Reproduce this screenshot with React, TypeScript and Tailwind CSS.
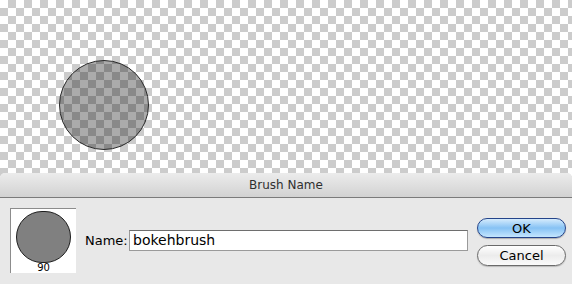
import React from "react";

const font = { fontFamily: '"DejaVu Sans", "Liberation Sans", sans-serif' };

export default function App() {
  return (
    <div className="flex h-[284px] w-[572px] flex-col overflow-hidden bg-[conic-gradient(#cccccc_25%,#ffffff_0_50%,#cccccc_0_75%,#ffffff_0)] bg-[length:16px_16px]" style={font}>
      {/* canvas with brush tip */}
      <div className="relative h-[173px] shrink-0">
        <div className="absolute left-[59px] top-[60px] h-[90px] w-[90px] rounded-full border border-[#2a2a2a] bg-[rgba(0,0,0,0.33)]" />
      </div>

      {/* dialog */}
      <div className="flex flex-1 flex-col overflow-hidden rounded-t-[5px] bg-[#e8e8e8]">
        <div className="flex h-[25px] shrink-0 items-center justify-center border-b border-[#7b7b7b] bg-gradient-to-b from-[#ececec] to-[#d2d2d2] text-[12px] text-[#2f2f2f]">
          Brush Name
        </div>

        <div className="flex items-start pl-[10px]">
          <div className="mt-[10px] flex h-[65px] w-[66px] shrink-0 flex-col items-center border-l border-t border-[#8c8c8c] bg-white">
            <div className="mt-[2px] h-[55px] w-[55px] rounded-full border border-[#1e1e1e] bg-[#808080]" />
            <div className="mt-[-1px] text-[10px] leading-[11px] text-black">90</div>
          </div>

          <div className="ml-[9px] mt-[32px] flex items-center">
            <span className="w-[44px] text-[13px] text-black">Name:</span>
            <div className="flex h-[21px] w-[339px] items-center border border-[#9a9a9a] border-t-[#6e6e6e] bg-white pl-[3px] text-[14px] text-black">
              bokehbrush
            </div>
          </div>

          <div className="ml-[9px] mt-[20px] flex flex-col gap-[7px]">
            <button className="flex h-[20px] w-[89px] items-center justify-center rounded-full border border-[#24448a] bg-gradient-to-b from-[#d5ebfc] via-[#86c2f4] to-[#c4e6fe] text-[13px] leading-none text-black shadow-[0_1px_1px_rgba(0,0,0,0.25)]">
              OK
            </button>
            <button className="flex h-[21px] w-[89px] items-center justify-center rounded-full border border-[#6a6a6a] bg-gradient-to-b from-[#ffffff] via-[#ececec] to-[#fafafa] text-[13px] leading-none text-black shadow-[0_1px_1px_rgba(0,0,0,0.2)]">
              Cancel
            </button>
          </div>
        </div>
      </div>
    </div>
  );
}
